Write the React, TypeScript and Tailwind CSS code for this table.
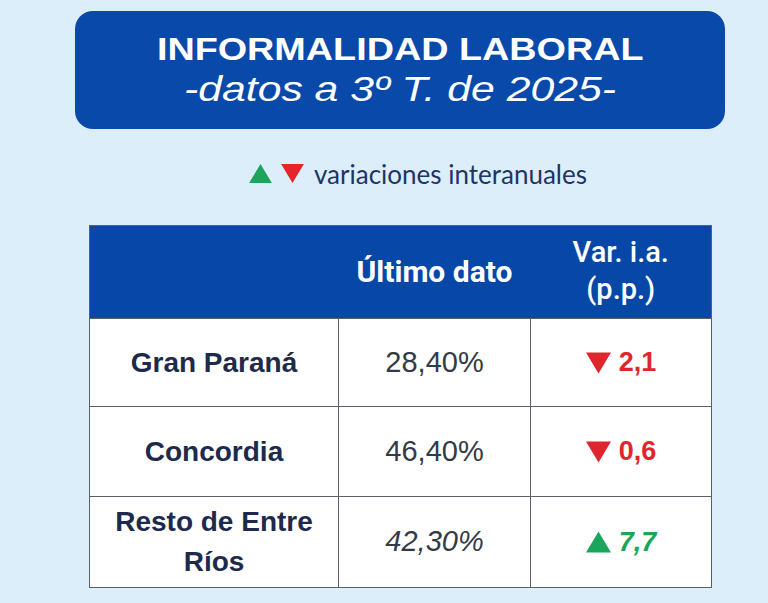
import React from "react";

const Up = ({ className = "" }: { className?: string }) => (
  <svg viewBox="0 0 24 20" className={className}>
    <polygon points="12,0 24,20 0,20" fill="currentColor" />
  </svg>
);
const Down = ({ className = "" }: { className?: string }) => (
  <svg viewBox="0 0 24 20" className={className}>
    <polygon points="0,0 24,0 12,20" fill="currentColor" />
  </svg>
);

const rows = [
  { name: <>Gran Paraná</>, val: "28,40%", dir: "down", v: "2,1", h: "h-[88px]", italic: false },
  { name: <>Concordia</>, val: "46,40%", dir: "down", v: "0,6", h: "h-[90px]", italic: false },
  { name: <>Resto de Entre<br />Ríos</>, val: "42,30%", dir: "up", v: "7,7", h: "h-[91px]", italic: true },
];

export default function App() {
  return (
    <div className="w-[768px] h-[603px] bg-[#ddeefb] overflow-hidden" style={{ fontFamily: "'Liberation Sans', Arial, sans-serif" }}>
      <div className="pt-[11px] pl-[75px]">
        <div className="w-[650px] h-[118px] rounded-[18px] bg-[#0849aa] flex flex-col items-center justify-center text-white pb-[2px]">
          <div className="text-[32px] leading-[40px] font-bold scale-x-[1.18]">INFORMALIDAD LABORAL</div>
          <div className="text-[35px] leading-[40px] italic scale-x-[1.22]">-datos a 3º T. de 2025-</div>
        </div>
      </div>

      <div className="h-[96px] pb-[7px] flex items-center justify-center gap-[9px] pl-[68px]">
        <Up className="w-[23px] h-[19px] text-[#1aa55a]" />
        <Down className="w-[23px] h-[19px] text-[#e3262c]" />
        <span className="text-[26px] leading-[30px] text-[#1f3564] ml-[1px]" style={{ fontFamily: "Lato, 'Noto Sans', sans-serif" }}>variaciones interanuales</span>
      </div>

      <div className="pl-[89px]">
        <table className="border-collapse border-[1.5px] border-[#5b6068] table-fixed w-[622px]">
          <colgroup>
            <col className="w-[249px]" />
            <col className="w-[192px]" />
            <col className="w-[181px]" />
          </colgroup>
          <thead style={{ fontFamily: "Roboto, 'Liberation Sans', sans-serif" }}>
            <tr className="h-[93px] bg-[#0647a8] text-white">
              <th></th>
              <th className="text-[30px] font-bold pb-[2px]">Último dato</th>
              <th className="text-[29px] font-medium leading-[37px] pb-[2px]">Var. i.a.<br />(p.p.)</th>
            </tr>
          </thead>
          <tbody className="bg-white">
            {rows.map((r, i) => (
              <tr key={i} className={r.h}>
                <td className="border-[1.5px] border-[#5b6068] text-center text-[28px] font-bold text-[#1e2a4c] leading-[40px]">{r.name}</td>
                <td className={"border-[1.5px] border-[#5b6068] text-center text-[29px] text-[#333a47] " + (r.italic ? "italic" : "")}>{r.val}</td>
                <td className="border-[1.5px] border-[#5b6068] text-center">
                  {r.dir === "down" ? (
                    <span className="inline-flex items-center gap-[8px] text-[27px] font-bold text-[#e0262d]">
                      <Down className="w-[25px] h-[22px]" />
                      {r.v}
                    </span>
                  ) : (
                    <span className="inline-flex items-center gap-[8px] text-[27px] font-bold italic text-[#1aa55a]">
                      <Up className="w-[25px] h-[22px]" />
                      {r.v}
                    </span>
                  )}
                </td>
              </tr>
            ))}
          </tbody>
        </table>
      </div>
    </div>
  );
}
